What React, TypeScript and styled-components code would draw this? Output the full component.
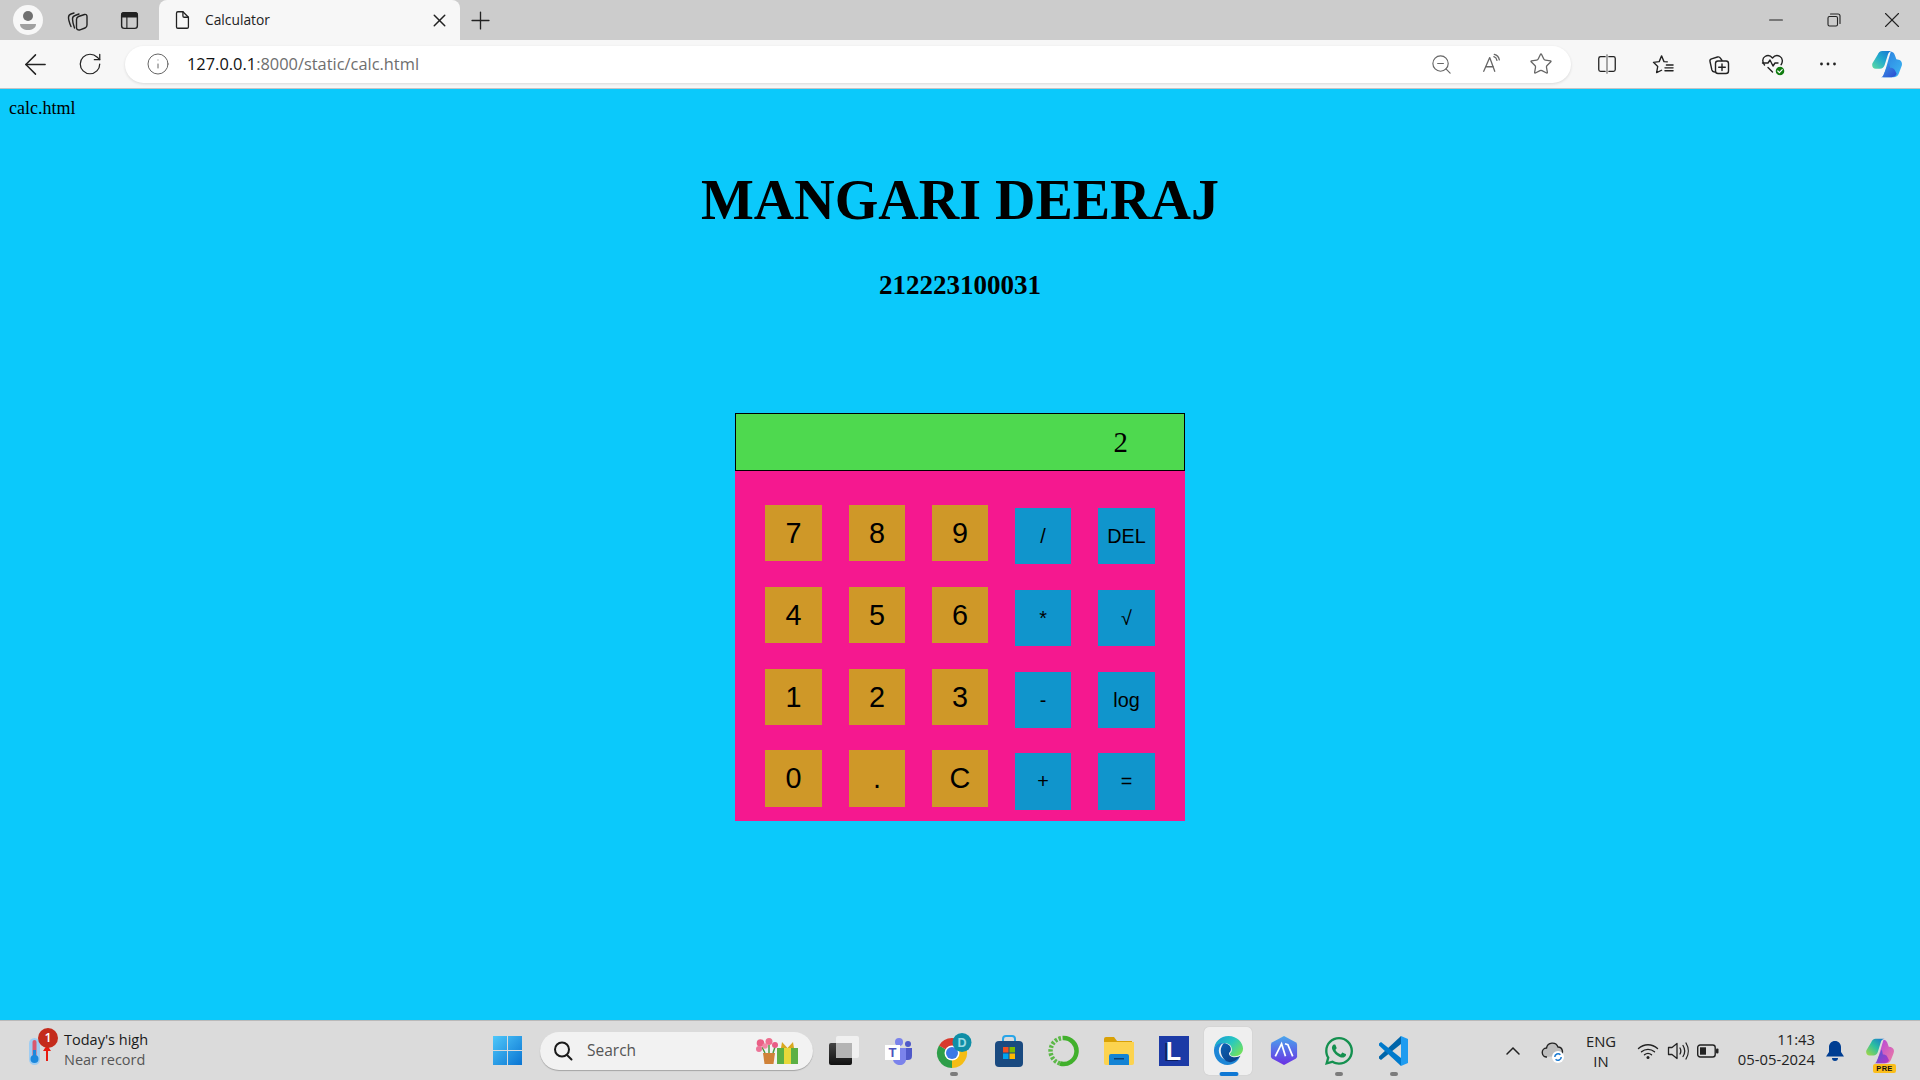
import React from "react";
import styled, { createGlobalStyle } from "styled-components";
import { ArrowLeft, RotateCw, Info, ZoomOut, Star, Plus, X, Minus } from "lucide-react";
import { FaWhatsapp } from "react-icons/fa";

const Global = createGlobalStyle`
  html, body { margin: 0; padding: 0; height: 100%; overflow: hidden; }
  #root { height: 100%; }
`;
const Shell = styled.div`display:flex;flex-direction:column;width:1920px;height:1080px;overflow:hidden;font-family:"Open Sans","Noto Sans",sans-serif;color:#1a1a1a;`;
const TabStrip = styled.div`display:flex;align-items:stretch;height:40px;background:#cccccc;flex:none;`;
const Slot = styled.div<{ $w: number }>`display:flex;align-items:center;justify-content:center;width:${p => p.$w}px;flex:none;position:relative;`;
const Tab = styled.div`display:flex;align-items:center;width:301px;flex:none;background:#f7f7f7;border-radius:8px 8px 0 0;padding-left:12px;box-sizing:border-box;`;
const TabTitle = styled.span`font-size:13.8px;margin-left:12px;padding-bottom:2px;flex:1;color:#222;`;
const Spacer = styled.div`flex:1;`;
const Toolbar = styled.div`display:flex;align-items:center;height:48px;background:#f7f7f7;border-bottom:1px solid #c4c4c4;flex:none;box-sizing:content-box;`;
const AddressPill = styled.div`display:flex;align-items:center;width:1446px;height:37px;margin-left:15px;flex:none;background:#fff;border-radius:19px;padding-left:20px;padding-right:8px;box-sizing:border-box;box-shadow:0 1px 3px rgba(0,0,0,.12);`;
const Url = styled.span`margin-left:17px;padding-bottom:2px;font-size:16.4px;color:#6e6e6e;white-space:nowrap;`;
const UrlHost = styled.span`color:#111;`;
const Page = styled.main`flex:1;background:#0bc9fb;display:flex;flex-direction:column;align-items:center;font-family:"Liberation Serif",serif;color:#000;min-height:0;`;
const FileLabel = styled.div`align-self:flex-start;font-size:18px;line-height:21px;margin:9px 0 0 9px;`;
const Heading = styled.h1`font-size:56px;line-height:66px;font-weight:700;margin:48px 0 0;`;
const RollNo = styled.h3`font-size:27px;line-height:30px;font-weight:700;margin:37px 0 0;`;
const Calc = styled.section`width:450px;margin-top:113px;background:#f5188f;height:408px;flex:none;`;
const Display = styled.div`height:58px;box-sizing:border-box;border:1px solid #000;background:#4ed94f;font-size:28.8px;display:flex;align-items:center;justify-content:flex-end;padding-right:56px;`;
const Keys = styled.div`display:grid;grid-template-columns:57px 56px 56px 56px 57px;column-gap:27px;grid-template-rows:82px 82px 81px 60px;padding:34px 0 0 30px;`;
const Key = styled.button<{ $op?: boolean; $tall?: boolean }>`
  border:0;padding:0;color:#000;font-family:"Liberation Sans",Arial,sans-serif;width:100%;
  height:${p => (p.$tall ? 57 : 56)}px;
  background:${p => (p.$op ? "#1095cc" : "#cf9828")};
  font-size:${p => (p.$op ? 19.8 : 28.8)}px;
  margin-top:${p => (p.$op ? 3 : 0)}px;
`;
const Taskbar = styled.footer`display:flex;align-items:center;height:60px;box-sizing:border-box;background:#dbdbdb;border-top:1px solid #b9b9b9;flex:none;`;
const Widget = styled.div`display:flex;align-items:center;width:480px;flex:none;padding-left:29px;box-sizing:border-box;position:relative;`;
const WidgetText = styled.div`display:flex;flex-direction:column;margin-left:11px;padding-bottom:2px;font-size:14.5px;line-height:20px;color:#1a1a1a;`;
const Muted = styled.span`color:#555;`;
const Badge = styled.span`position:absolute;left:38px;top:-2px;width:20px;height:20px;border-radius:50%;background:#c42b1c;color:#fff;font-size:12.5px;font-weight:600;line-height:20px;text-align:center;`;
const SearchBox = styled.div`display:flex;align-items:center;width:273px;height:38px;margin:0 3px 0 6px;flex:none;box-sizing:border-box;background:#f2f2f2;border-radius:19px;padding:0 15px 0 12px;box-shadow:0 1px 1px rgba(0,0,0,.25);`;
const SearchText = styled.span`margin-left:13px;padding-bottom:2px;flex:1;font-size:15.5px;color:#555;`;
const AppSlot = styled.div`display:flex;align-items:center;justify-content:center;position:relative;width:55px;height:48px;flex:none;`;
const ActiveBg = styled.div`position:absolute;left:3px;top:0;width:48px;height:48px;border-radius:5px;background:#efefef;box-shadow:0 0 1px rgba(0,0,0,.2);`;
const Indicator = styled.span<{ $on?: boolean }>`position:absolute;bottom:-1px;left:50%;transform:translateX(-50%);height:4px;border-radius:2px;width:${p => (p.$on ? 19 : 8)}px;background:${p => (p.$on ? "#0f78d4" : "#7c7c7c")};`;
const IconFront = styled.div`position:relative;display:flex;`;
const Tray = styled.div`display:flex;align-items:center;margin-left:auto;padding-right:15px;`;
const Stack = styled.div<{ $w: number; $right?: boolean }>`display:flex;flex-direction:column;width:${p => p.$w}px;flex:none;font-size:14.8px;line-height:20px;color:#222;text-align:${p => (p.$right ? "right" : "center")};padding-bottom:${p => (p.$right ? 4 : 0)}px;`;
const LogoL = styled.div`width:30px;height:30px;background:#1c3aa6;color:#fff;font:700 25px/30px "Liberation Sans",sans-serif;text-align:center;text-shadow:-2px 1px 0 #0b1c5e;`;
const PreBadge = styled.span`position:absolute;left:18px;top:27px;width:23px;height:9px;border-radius:2px;background:#fbbe1b;color:#111;font:700 7.5px/9px "Liberation Sans",sans-serif;text-align:center;letter-spacing:.3px;`;

const Svg: React.FC<{ s?: number; v?: number; children: React.ReactNode }> = ({ s = 20, v = 24, children }) => (
  <svg width={s} height={s} viewBox={`0 0 ${v} ${v}`} fill="none" stroke="#222" strokeWidth={1.4} strokeLinecap="round" strokeLinejoin="round" style={{ display: "block", flex: "none" }}>{children}</svg>
);

const Profile = () => (
  <svg width={30} height={30} viewBox="0 0 30 30"><circle cx="15" cy="15" r="15" fill="#f7f7f7" /><circle cx="15" cy="11" r="5" fill="#707070" /><path d="M7 19h16c0 4-4 6-8 6s-8-2-8-6z" fill="#a0a0a0" /></svg>
);
const Collections = () => (
  <Svg s={24}>
    <path d="M5 18.500C3.500 15 2.500 11.500 2.500 9.500c0-2 1-3 2.500-3.500l3-1" />
    <path d="M8.500 20C7.300 16.500 6.500 13 6.500 11c0-2 1-3 2.500-3.500l4-1.500" />
    <path d="M10.500 11.500c0-1.500.7-2.500 2-3l6-2c1.500-.4 2.500.6 2.500 2V17c0 1.500-.7 2.500-2 3l-5 1.800c-1.800.5-3.500-.3-3.500-2z" />
  </Svg>
);
const VerticalTabs = () => (
  <Svg s={21}><rect x="3" y="3" width="18" height="18" rx="3" strokeWidth={1.6} /><path d="M3 6a3 3 0 0 1 3-3h12a3 3 0 0 1 3 3v2H3z" fill="#222" /><path d="M9 8v13" strokeWidth={1.3} /></Svg>
);
const Doc = () => (
  <Svg s={22}><path d="M6 4.500A1.500 1.500 0 0 1 7.500 3H13l6 6v10.500a1.500 1.500 0 0 1-1.500 1.500h-10A1.500 1.500 0 0 1 6 19.500z" /><path d="M13 3v4.500A1.500 1.500 0 0 0 14.500 9H19" /></Svg>
);
const Restore = () => (
  <Svg s={14} v={14}><rect x="1" y="3.500" width="9.500" height="9.500" rx="1.500" strokeWidth={1.1} /><path d="M3.500 1h7.500A2 2 0 0 1 13 3v7.500" strokeWidth={1.1} /></Svg>
);
const ReadAloud = () => (
  <Svg s={22}><path d="M3 20 9.500 5 15 20M5 15h8.500" stroke="#666" /><path d="M14 4c2 .6 3 2 3.400 4M14.500 1.500c3.200.8 5 3 5.500 6" stroke="#666" /></Svg>
);
const Split = () => (
  <Svg s={22}><path d="M10 4H5a2 2 0 0 0-2 2v12a2 2 0 0 0 2 2h5M14 4h5a2 2 0 0 1 2 2v12a2 2 0 0 1-2 2h-5" /><path d="M12 2v20" stroke="#777" /></Svg>
);
const Favs = () => (
  <Svg s={23}>
    <path d="M16 9.200 12.500 9 10 3 7.500 9l-6 .7 4.500 4.300L4.800 20.500 10 18" />
    <path d="M15 12.500h7M13.500 15.500h8.500M13.500 18.500h8.500" />
  </Svg>
);
const CollectAdd = () => (
  <Svg s={24}><path d="M7.500 20c-1.500-.2-2.300-1-2.700-2.300L3 9.500c-.3-1.300.2-2.300 1.500-2.700l6-1.800c1.200-.3 2.300 0 2.900 1.100L15 8.500" /><rect x="8.500" y="9" width="13" height="12.500" rx="2.500" /><path d="M15 12v6.500M11.700 15.200h6.600" /></Svg>
);
const Health = () => (
  <svg width={26} height={26} viewBox="0 0 26 26" fill="none" stroke="#222" strokeWidth={1.4} strokeLinejoin="round" strokeLinecap="round"><path d="M4.500 14C2 11 2.300 7 5 5.500c2.500-1.500 5.500-1 7.500 1.500 2-2.500 5-3 7.500-1.500 2.800 1.700 3 5.500 1 8.500" /><path d="M2.500 12H8l2-3 3 6 2-3h3M8 16.500l4.500 4.500" /><circle cx="20" cy="20" r="5" fill="#107c10" stroke="#f7f7f7" /><path d="m17.800 20 1.600 1.600 2.800-3" stroke="#fff" strokeWidth={1.2} /></svg>
);
const Dots = () => (
  <svg width={18} height={4} viewBox="0 0 18 4"><circle cx="2.500" cy="2" r="1.400" fill="#222" /><circle cx="9" cy="2" r="1.400" fill="#222" /><circle cx="15.500" cy="2" r="1.400" fill="#222" /></svg>
);
const Copilot: React.FC<{ s?: number; id: string; pink?: boolean }> = ({ s = 30, id, pink }) => (
  <svg width={s} height={s} viewBox="0 0 32 32">
    <defs>
      <linearGradient id={id + "a"} x1="0" y1="1" x2="1" y2="0"><stop offset="0" stopColor={pink ? "#a8d840" : "#5ddba0"} /><stop offset=".5" stopColor={pink ? "#2cc0a0" : "#22aacd"} /><stop offset="1" stopColor="#1570d4" /></linearGradient>
      <linearGradient id={id + "b"} x1="0" y1="0" x2="1" y2="1"><stop offset="0" stopColor={pink ? "#b03ee0" : "#2a7de0"} /><stop offset="1" stopColor={pink ? "#f080a0" : "#3db8f2"} /></linearGradient>
      <linearGradient id={id + "c"} x1="0" y1="0" x2="1" y2="1"><stop offset="0" stopColor={pink ? "#3a5ee0" : "#3aa0ea"} /><stop offset="1" stopColor={pink ? "#c030c0" : "#2c4ad0"} /></linearGradient>
    </defs>
    <path d="M20 3c2 0 3.500 1.200 4.300 3.300L26 11c3.500.2 6 1.800 6 5 0 1-.3 2-.7 3l-2.700 7c-1 2.700-3 4-5.600 4H12z" fill={`url(#${id}b)`} />
    <path d="M18 14 12 28c-.5 1.200-1 2-2.500 2H21c2.500 0 4.500-1.300 5.300-3.500l-2-4c-1-2-3-2.500-5-2.500z" fill={`url(#${id}c)`} />
    <path d="M11 2h10.500c-2.300 0-3.700 1.500-4.400 3.500L13.500 17c-.8 2.500-2.500 4-5 4H4c-3 0-4.500-2.800-3.500-5.800L6 6c1-2.500 2.500-4 5-4z" fill={`url(#${id}a)`} />
  </svg>
);
const Thermo = () => (
  <svg width={24} height={30} viewBox="0 0 24 30"><rect x="0" y="2" width="11" height="27" rx="5.500" fill="#9fcdf2" /><rect x="3.500" y="4" width="4" height="18" rx="2" fill="#d9586e" /><circle cx="5.500" cy="23" r="4" fill="#1c88dc" /><rect x="4" y="14" width="3" height="8" fill="#1c88dc" /><path d="M18 8v17" stroke="#e81b10" strokeWidth={2} /><path d="m14 15h8l-4-6z" fill="#e81b10" /></svg>
);
const WinLogo = () => (
  <svg width={29} height={29} viewBox="0 0 29 29"><defs><linearGradient id="wl" x1="0" y1="0" x2="1" y2="1"><stop offset="0" stopColor="#4fc8fa" /><stop offset="1" stopColor="#0a74d2" /></linearGradient></defs><path d="M0 0h14v14H0zM15 0h14v14H15zM0 15h14v14H0zM15 15h14v14H15z" fill="url(#wl)" /></svg>
);
const Glass = () => (
  <svg width={22} height={22} viewBox="0 0 22 22" fill="none" stroke="#1a1a1a" strokeWidth={2} strokeLinecap="round"><circle cx="10" cy="9.500" r="7" /><path d="m15 15 4.500 4.500" /></svg>
);
const Gift = () => (
  <svg width={42} height={26} viewBox="0 0 42 26">
    <path d="M7 15h12l-1.500 11h-9z" fill="#d08238" /><path d="M13 15V7M9 15 6 9M17 15l2-6" stroke="#4f9a45" strokeWidth={1.500} />
    <circle cx="4.500" cy="5" r="3.800" fill="#ea5f85" /><circle cx="13" cy="3.500" r="3.500" fill="#ee6f90" /><circle cx="19" cy="7" r="3" fill="#e95c86" /><circle cx="3" cy="11" r="3" fill="#ec7498" /><circle cx="9" cy="8" r="2.800" fill="#f28aa6" />
    <rect x="21" y="10" width="21" height="16" fill="#5cb045" /><rect x="28" y="10" width="7" height="16" fill="#e8d83a" /><path d="M26 4 31.500 10 37 4l1 6H25z" fill="#d9a820" />
  </svg>
);
const TaskView = () => (
  <svg width={32} height={32} viewBox="0 0 32 32"><defs><linearGradient id="tv" x1="0" y1="0" x2="0" y2="1"><stop offset="0" stopColor="#444" /><stop offset="1" stopColor="#111" /></linearGradient></defs><rect x="1" y="8" width="23" height="22" rx="2" fill="url(#tv)" /><rect x="8" y="1" width="23" height="22" rx="2" fill="#f2f2f2" fillOpacity=".9" /><rect x="8" y="8" width="16" height="15" fill="#b4b4b4" /></svg>
);
const Teams = () => (
  <svg width={30} height={30} viewBox="0 0 30 30"><circle cx="15" cy="6" r="4" fill="#7b83eb" /><circle cx="24" cy="8" r="3" fill="#5059c9" /><path d="M20 12h8v8c0 3-2 4-4 4h-4z" fill="#5059c9" /><path d="M9 12h13v11c0 4-3 6-6 6s-7-2-7-6z" fill="#7b83eb" /><rect x="1" y="9" width="15" height="15" fill="#fff" /><text x="8.500" y="21" fontFamily="Liberation Sans" fontWeight="700" fontSize="13" fill="#4b53bc" textAnchor="middle">T</text></svg>
);
const Chrome = () => (
  <svg width={36} height={36} viewBox="0 0 36 36">
    <path d="M16 20 29 12.500A15 15 0 0 1 16 35z" fill="#f5bd15" />
    <path d="M16 20V35A15 15 0 0 1 3 12.500z" fill="#2e9e49" />
    <path d="M16 20 3 12.500A15 15 0 0 1 29 12.500z" fill="#d93a2d" />
    <circle cx="16" cy="20" r="7.500" fill="#fff" /><circle cx="16" cy="20" r="6" fill="#3b78e7" />
    <circle cx="26" cy="9.500" r="9.500" fill="#0f8ea6" /><text x="26" y="14" fontSize="12.500" fontFamily="Liberation Sans" textAnchor="middle" fill="#9adbe4" fontWeight="700">D</text>
  </svg>
);
const Store = () => (
  <svg width={30} height={32} viewBox="0 0 30 32"><path d="M9 6V4a3 3 0 0 1 3-3h6a3 3 0 0 1 3 3v2" fill="none" stroke="#29a5e8" strokeWidth={2} /><rect x="1" y="6" width="28" height="26" rx="4" fill="#1a4a80" /><rect x="9" y="12" width="5.500" height="5.500" fill="#f25022" /><rect x="15.500" y="12" width="5.500" height="5.500" fill="#7fba00" /><rect x="9" y="18.500" width="5.500" height="5.500" fill="#00a4ef" /><rect x="15.500" y="18.500" width="5.500" height="5.500" fill="#ffb900" /></svg>
);
const Ring = () => (
  <svg width={32} height={32} viewBox="0 0 32 32" fill="none"><path d="M15 3a13 13 0 1 1-3 25.500" stroke="#41b02c" strokeWidth={4.500} /><path d="M12 28.500A13 13 0 0 1 15 3" stroke="#5cb848" strokeWidth={4.500} strokeDasharray="2.500 1.500" /></svg>
);
const Folder = () => (
  <svg width={30} height={30} viewBox="0 0 30 30"><path d="M0 3a2 2 0 0 1 2-2h8l3 4h15v5H0z" fill="#d9a106" /><path d="M0 6h30v21a2 2 0 0 1-2 2H2a2 2 0 0 1-2-2z" fill="#fcd34f" /><path d="M5 20a2 2 0 0 1 2-2h16a2 2 0 0 1 2 2v9H5z" fill="#1483d4" /><rect x="10" y="22" width="10" height="1.500" fill="#0c3f72" /></svg>
);
const Edge = () => (
  <svg width={31} height={31} viewBox="0 0 32 32">
    <defs>
      <linearGradient id="eg" x1="0" y1="0" x2="1" y2=".7"><stop offset="0" stopColor="#1596d8" /><stop offset=".55" stopColor="#28c8c0" /><stop offset="1" stopColor="#70e060" /></linearGradient>
      <linearGradient id="eb" x1="0" y1="0" x2="1" y2="1"><stop offset="0" stopColor="#0c62b4" /><stop offset="1" stopColor="#0a3a80" /></linearGradient>
    </defs>
    <path d="M1 16C1 7 8 1 16 1c9 0 15 7 15 13 0 5-4 8-8.500 8-3 0-5-1-5-2.500 0-1 2-1.500 2-4.500 0-4-3-6.500-7-6.500C7 8.500 1 11 1 16z" fill="url(#eg)" />
    <path d="M1 16c0-5 5-8 10-8-3 1.500-5 4.500-5 8 0 6 5 10.500 11 10.500 4 0 8-1.500 11-5-2 6-7 9.500-13 9.500C7 31 1 24 1 16z" fill="#1d86d6" />
    <path d="M8 16c0-2.500 1.500-6 3-7.500 4 0 7.500 2.500 7.500 6 0 3-2 3.500-2 4.500 0 2.500 3 4 6 4 3 0 5-1 6-1.500-3 3.500-7 6.500-11 6.500-5 0-9.500-6-9.500-12z" fill="url(#eb)" />
  </svg>
);
const Atlas = () => (
  <svg width={28} height={31} viewBox="0 0 28 32"><defs><linearGradient id="at" x1="0" y1="0" x2="0" y2="1"><stop offset="0" stopColor="#4aa6ec" /><stop offset="1" stopColor="#6a30e4" /></linearGradient></defs><path d="M14 1 26 7.500a3 3 0 0 1 1.500 2.500v12a3 3 0 0 1-1.500 2.500L14 31 2 24.500A3 3 0 0 1 .5 22V10A3 3 0 0 1 2 7.500z" fill="url(#at)" /><path d="M5 22 11.500 9l4 13M15 9l3 1 5 12" fill="none" stroke="#fff" strokeWidth={1.800} /></svg>
);
const VSCode = () => (
  <svg width={32} height={32} viewBox="0 0 32 32"><path d="M23 9 3 25l-2-1.500v-2L23 1z" fill="#0065a9" /><path d="M23 23 3 7 1 8.500v2L23 31z" fill="#007acc" /><path d="M23 1 30 4v24l-7 3z" fill="#1f9cf0" /></svg>
);
const Chevron = () => (
  <svg width={16} height={10} viewBox="0 0 16 10" fill="none" stroke="#222" strokeWidth={1.500} strokeLinecap="round"><path d="m2 8 6-6 6 6" /></svg>
);
const Cloud = () => (
  <svg width={24} height={24} viewBox="0 0 24 24"><path d="M6 18a4.500 4.500 0 0 1-.5-9A6 6 0 0 1 17 8a4.500 4.500 0 0 1 2 8.500" fill="#bdbdbd" stroke="#222" strokeWidth={1.400} /><circle cx="17" cy="18" r="6" fill="#fff" /><path d="M13.800 18a3.200 3.200 0 0 1 5.600-2.200M20.200 18a3.200 3.200 0 0 1-5.600 2.200" fill="none" stroke="#1878d0" strokeWidth={1.500} /></svg>
);
const Wifi = () => (
  <svg width={22} height={18} viewBox="0 0 22 18" fill="none" stroke="#222" strokeWidth={1.400} strokeLinecap="round"><path d="M1.500 6.500c5.500-5 13.500-5 19 0M4.500 9.800c3.800-3.300 9.200-3.300 13 0M7.500 12.800c2-1.600 5-1.600 7 0" /><circle cx="11" cy="15.500" r="1.500" fill="#222" stroke="none" /></svg>
);
const Volume = () => (
  <svg width={22} height={20} viewBox="0 0 22 20" fill="none" stroke="#222" strokeWidth={1.300} strokeLinejoin="round" strokeLinecap="round"><path d="M1.500 6.500H5L10 2.500v15l-5-4H1.500z" /><path d="M13 7c1 1.800 1 4.200 0 6M16 4.500c2 3.200 2 7.800 0 11M19 2c3 4.800 3 11.200 0 16" /></svg>
);
const Battery = () => (
  <svg width={22} height={14} viewBox="0 0 22 14"><rect x=".7" y="1" width="17.500" height="12" rx="2.500" fill="none" stroke="#222" strokeWidth={1.400} /><rect x="3" y="3.300" width="6" height="7.400" fill="#222" /><rect x="19" y="4.500" width="2.500" height="5" rx="1" fill="#222" /></svg>
);
const Bell = () => (
  <svg width={18} height={20} viewBox="0 0 18 20"><path d="M9 0c3.500 0 6 2.700 6 6v5l3 4.500H0L3 11V6c0-3.300 2.500-6 6-6z" fill="#003e92" /><path d="M6 17h6a3 3 0 0 1-6 0z" fill="#003e92" /></svg>
);

const keys: { t: string; op?: boolean; tall?: boolean }[] = [
  { t: "7" }, { t: "8" }, { t: "9" }, { t: "/", op: true }, { t: "DEL", op: true },
  { t: "4" }, { t: "5" }, { t: "6" }, { t: "*", op: true }, { t: "√", op: true },
  { t: "1" }, { t: "2" }, { t: "3" }, { t: "-", op: true }, { t: "log", op: true },
  { t: "0", tall: true }, { t: ".", tall: true }, { t: "C", tall: true }, { t: "+", op: true, tall: true }, { t: "=", op: true, tall: true },
];

const apps: { icon: React.ReactNode; dot?: boolean; active?: boolean }[] = [
  { icon: <TaskView /> }, { icon: <Teams /> }, { icon: <Chrome />, dot: true }, { icon: <Store /> }, { icon: <Ring /> },
  { icon: <Folder /> }, { icon: <LogoL>L</LogoL> }, { icon: <Edge />, active: true }, { icon: <Atlas /> },
  { icon: <FaWhatsapp size={32} color="#14904f" />, dot: true }, { icon: <VSCode />, dot: true },
];

export default function App() {
  return (
    <Shell>
      <Global />
      <TabStrip>
        <Slot $w={56}><Profile /></Slot>
        <Slot $w={43}><Collections /></Slot>
        <Slot $w={60}><VerticalTabs /></Slot>
        <Tab>
          <Doc />
          <TabTitle>Calculator</TabTitle>
          <Slot $w={42}><X size={21} strokeWidth={1.7} color="#222" /></Slot>
        </Tab>
        <Slot $w={40}><Plus size={29} strokeWidth={1.1} color="#222" /></Slot>
        <Spacer />
        <Slot $w={58}><Minus size={22} strokeWidth={1.1} color="#222" /></Slot>
        <Slot $w={58}><Restore /></Slot>
        <Slot $w={57}><X size={26} strokeWidth={1} color="#222" /></Slot>
      </TabStrip>
      <Toolbar>
        <Slot $w={70}><ArrowLeft size={33} strokeWidth={1.05} color="#222" /></Slot>
        <Slot $w={40}><RotateCw size={26} strokeWidth={1.15} color="#222" /></Slot>
        <AddressPill>
          <Slot $w={25}><Info size={24} strokeWidth={1} color="#666" /></Slot>
          <Url><UrlHost>127.0.0.1</UrlHost>:8000/static/calc.html</Url>
          <Spacer />
          <Slot $w={48}><ZoomOut size={23} strokeWidth={1.2} color="#666" /></Slot>
          <Slot $w={54}><ReadAloud /></Slot>
          <Slot $w={44}><Star size={24} strokeWidth={1.3} color="#666" /></Slot>
        </AddressPill>
        <Slot $w={72}><Split /></Slot>
        <Slot $w={40}><Favs /></Slot>
        <Slot $w={72}><CollectAdd /></Slot>
        <Slot $w={36}><Health /></Slot>
        <Slot $w={74}><Dots /></Slot>
        <Slot $w={44}><Copilot id="tb" /></Slot>
      </Toolbar>
      <Page>
        <FileLabel>calc.html</FileLabel>
        <Heading>MANGARI DEERAJ</Heading>
        <RollNo>212223100031</RollNo>
        <Calc>
          <Display>2</Display>
          <Keys>
            {keys.map(k => <Key key={k.t} $op={k.op} $tall={k.tall}>{k.t}</Key>)}
          </Keys>
        </Calc>
      </Page>
      <Taskbar>
        <Widget>
          <Thermo />
          <WidgetText><span>Today's high</span><Muted>Near record</Muted></WidgetText>
          <Badge>1</Badge>
        </Widget>
        <Slot $w={54}><WinLogo /></Slot>
        <SearchBox><Glass /><SearchText>Search</SearchText><Gift /></SearchBox>
        {apps.map((a, i) => (
          <AppSlot key={i}>
            {a.active && <ActiveBg />}
            <IconFront>{a.icon}</IconFront>
            {(a.dot || a.active) && <Indicator $on={a.active} />}
          </AppSlot>
        ))}
        <Tray>
          <Slot $w={48}><Chevron /></Slot>
          <Slot $w={32}><Cloud /></Slot>
          <Stack $w={64}><span>ENG</span><span>IN</span></Stack>
          <Slot $w={30}><Wifi /></Slot>
          <Slot $w={30}><Volume /></Slot>
          <Slot $w={30}><Battery /></Slot>
          <Stack $w={92} $right><span>11:43</span><span>05-05-2024</span></Stack>
          <Slot $w={40}><Bell /></Slot>
          <Slot $w={50}><Copilot s={28} id="tray" pink /><PreBadge>PRE</PreBadge></Slot>
        </Tray>
      </Taskbar>
    </Shell>
  );
}
